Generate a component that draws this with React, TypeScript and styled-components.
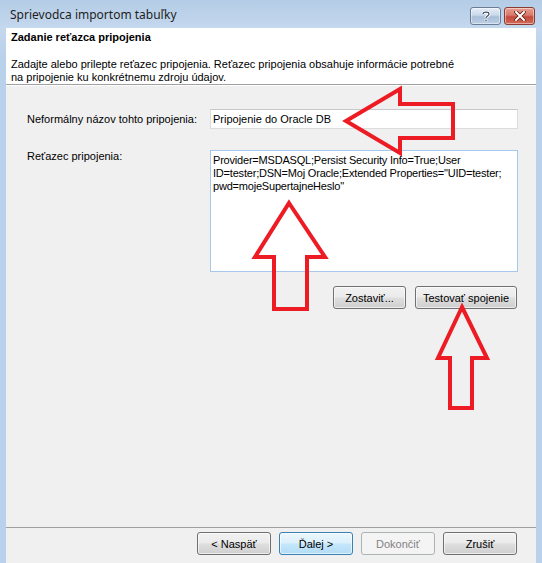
import styled, { createGlobalStyle } from 'styled-components';

const GlobalStyle = createGlobalStyle`
  html, body {
    margin: 0;
    padding: 0;
    background: #b9d1ea;
  }
`;

const Window = styled.div`
  position: relative;
  width: 542px;
  height: 563px;
  display: flex;
  flex-direction: column;
  background: linear-gradient(to bottom, #b4cce6 0px, #c4d8ee 28px, #b9d1ea 60px);
  font-family: 'Liberation Sans', Arial, sans-serif;
  font-size: 11px;
  color: #000;
  overflow: hidden;
`;

const TitleBar = styled.div`
  height: 28px;
  display: flex;
  align-items: center;
  justify-content: space-between;
  padding: 0 7px 0 10px;
  flex-shrink: 0;
`;

const Title = styled.div`
  font-family: 'Segoe UI', 'Noto Sans', 'Open Sans', sans-serif;
  font-size: 12px;
  color: #1e1e1e;
  margin-top: 1px;
`;

const CaptionButtons = styled.div`
  display: flex;
  gap: 3px;
  margin-top: 4px;
`;

const CaptionButton = styled.div<{ $close?: boolean }>`
  width: 29px;
  height: 16px;
  border: 1px solid ${(p) => (p.$close ? '#8a3b34' : '#6c7c92')};
  border-radius: 3px;
  display: flex;
  align-items: center;
  justify-content: center;
  background: ${(p) =>
    p.$close
      ? 'linear-gradient(to bottom, #e8a090 0%, #d7796b 45%, #c4493c 55%, #d26a58 100%)'
      : 'linear-gradient(to bottom, #e6eef7 0%, #c9d8ea 45%, #a9bfd8 55%, #bcd0e6 100%)'};
  box-shadow: inset 0 0 0 1px rgba(255, 255, 255, 0.45);
`;

const Client = styled.div`
  flex: 1;
  margin: 0 6px;
  display: flex;
  flex-direction: column;
  background: #f0f0f0;
`;

const Header = styled.div`
  background: #fff;
  height: 57px;
  padding: 3px 0 0 5px;
  border-bottom: 1px solid #a0a0a0;
  flex-shrink: 0;
  box-sizing: border-box;
`;

const HeaderTitle = styled.div`
  font-weight: bold;
  line-height: 12px;
`;

const HeaderText = styled.div`
  margin-top: 15px;
  line-height: 13px;
`;

const Body = styled.div`
  flex: 1;
  padding: 23px 18px 0 21px;
  display: flex;
  flex-direction: column;
  border-top: 1px solid #fff;
`;

const FormGrid = styled.div`
  display: grid;
  grid-template-columns: 183px 308px;
  row-gap: 21px;
`;

const Label = styled.div<{ $top?: boolean }>`
  align-self: ${(p) => (p.$top ? 'start' : 'center')};
`;

const TextField = styled.div`
  height: 20px;
  box-sizing: border-box;
  background: #fff;
  border: 1px solid #dcdcdc;
  border-top-color: #c8c8c8;
  padding: 0 2px;
  display: flex;
  align-items: center;
  white-space: nowrap;
`;

const TextArea = styled.div`
  height: 122px;
  box-sizing: border-box;
  background: #fff;
  border: 1px solid #a6c8ec;
  padding: 3px 2px;
  line-height: 13px;
  letter-spacing: -0.2px;
  white-space: nowrap;
`;

const ActionRow = styled.div`
  display: flex;
  justify-content: flex-end;
  gap: 9px;
  margin-top: 14px;
  padding-right: 1px;
`;

const Button = styled.div<{ $w: number; $variant?: 'default' | 'disabled' }>`
  width: ${(p) => p.$w}px;
  height: 23px;
  box-sizing: border-box;
  border-radius: 3px;
  display: flex;
  align-items: center;
  justify-content: center;
  border: 1px solid
    ${(p) => (p.$variant === 'default' ? '#3c7fb1' : p.$variant === 'disabled' ? '#adb2b5' : '#707070')};
  color: ${(p) => (p.$variant === 'disabled' ? '#838383' : '#000')};
  background: ${(p) =>
    p.$variant === 'default'
      ? 'linear-gradient(to bottom, #ecf7fd 0%, #dcf0fc 45%, #c3e6fb 55%, #b2dcf6 100%)'
      : p.$variant === 'disabled'
      ? '#f4f4f4'
      : 'linear-gradient(to bottom, #f2f2f2 0%, #ebebeb 45%, #dddddd 55%, #cfcfcf 100%)'};
  box-shadow: ${(p) => (p.$variant === 'disabled' ? 'none' : 'inset 0 0 0 1px rgba(255,255,255,0.6)')};
`;

const Footer = styled.div`
  height: 36px;
  flex-shrink: 0;
  border-top: 1px solid #a0a0a0;
  box-sizing: border-box;
  display: flex;
  justify-content: flex-end;
  align-items: flex-start;
  padding: 4px 19px 0 0;
`;

const FooterButtons = styled.div`
  display: flex;
  gap: 8px;
`;

const Overlay = styled.svg`
  position: absolute;
  left: 0;
  top: 0;
  pointer-events: none;
`;

const HelpGlyph = () => (
  <svg width="10" height="12" viewBox="0 0 10 12">
    <path d="M2 4 C2 1.5 8 1.5 8 4 C8 6 5 6 5 8" fill="none" stroke="#fff" strokeWidth="3" />
    <path d="M2 4 C2 1.5 8 1.5 8 4 C8 6 5 6 5 8" fill="none" stroke="#3b4b63" strokeWidth="1.2" />
    <rect x="4" y="9.5" width="2" height="2" fill="#3b4b63" stroke="#fff" strokeWidth="0.6" />
  </svg>
);

const CloseGlyph = () => (
  <svg width="12" height="10" viewBox="0 0 12 10">
    <path d="M2 1 L10 9 M10 1 L2 9" stroke="#5a1d17" strokeWidth="3.6" strokeLinecap="square" />
    <path d="M2 1 L10 9 M10 1 L2 9" stroke="#fff" strokeWidth="2" strokeLinecap="square" />
  </svg>
);

// red hand-drawn arrows pasted over the dialog
const arrows = [
  'M346,121 L400,89 L400,104 L453,104 L453,138 L400,138 L400,153 Z',
  'M289,203 L325,257 L307,257 L307,309 L274,309 L274,257 L255,257 Z',
  'M462,307 L487,358 L472,358 L472,408 L450,408 L450,358 L438,358 Z',
];

export default function App() {
  return (
    <>
      <GlobalStyle />
      <Window>
        <TitleBar>
          <Title>Sprievodca importom tabuľky</Title>
          <CaptionButtons>
            <CaptionButton>
              <HelpGlyph />
            </CaptionButton>
            <CaptionButton $close>
              <CloseGlyph />
            </CaptionButton>
          </CaptionButtons>
        </TitleBar>

        <Client>
          <Header>
            <HeaderTitle>Zadanie reťazca pripojenia</HeaderTitle>
            <HeaderText>
              Zadajte alebo prilepte reťazec pripojenia. Reťazec pripojenia obsahuje informácie potrebné
              <br />
              na pripojenie ku konkrétnemu zdroju údajov.
            </HeaderText>
          </Header>

          <Body>
            <FormGrid>
              <Label>Neformálny názov tohto pripojenia:</Label>
              <TextField>Pripojenie do Oracle DB</TextField>
              <Label $top>Reťazec pripojenia:</Label>
              <TextArea>
                Provider=MSDASQL;Persist Security Info=True;User
                <br />
                ID=tester;DSN=Moj Oracle;Extended Properties="UID=tester;
                <br />
                pwd=mojeSupertajneHeslo"
              </TextArea>
            </FormGrid>
            <ActionRow>
              <Button $w={73}>Zostaviť...</Button>
              <Button $w={102}>Testovať spojenie</Button>
            </ActionRow>
          </Body>

          <Footer>
            <FooterButtons>
              <Button $w={74}>&lt; Naspäť</Button>
              <Button $w={74} $variant="default">
                Ďalej &gt;
              </Button>
              <Button $w={74} $variant="disabled">
                Dokončiť
              </Button>
              <Button $w={74}>Zrušiť</Button>
            </FooterButtons>
          </Footer>
        </Client>

        <Overlay width="542" height="563" viewBox="0 0 542 563">
          {arrows.map((d) => (
            <path key={d} d={d} fill="none" stroke="#ed1c24" strokeWidth="4" strokeLinejoin="miter" />
          ))}
        </Overlay>
      </Window>
    </>
  );
}
